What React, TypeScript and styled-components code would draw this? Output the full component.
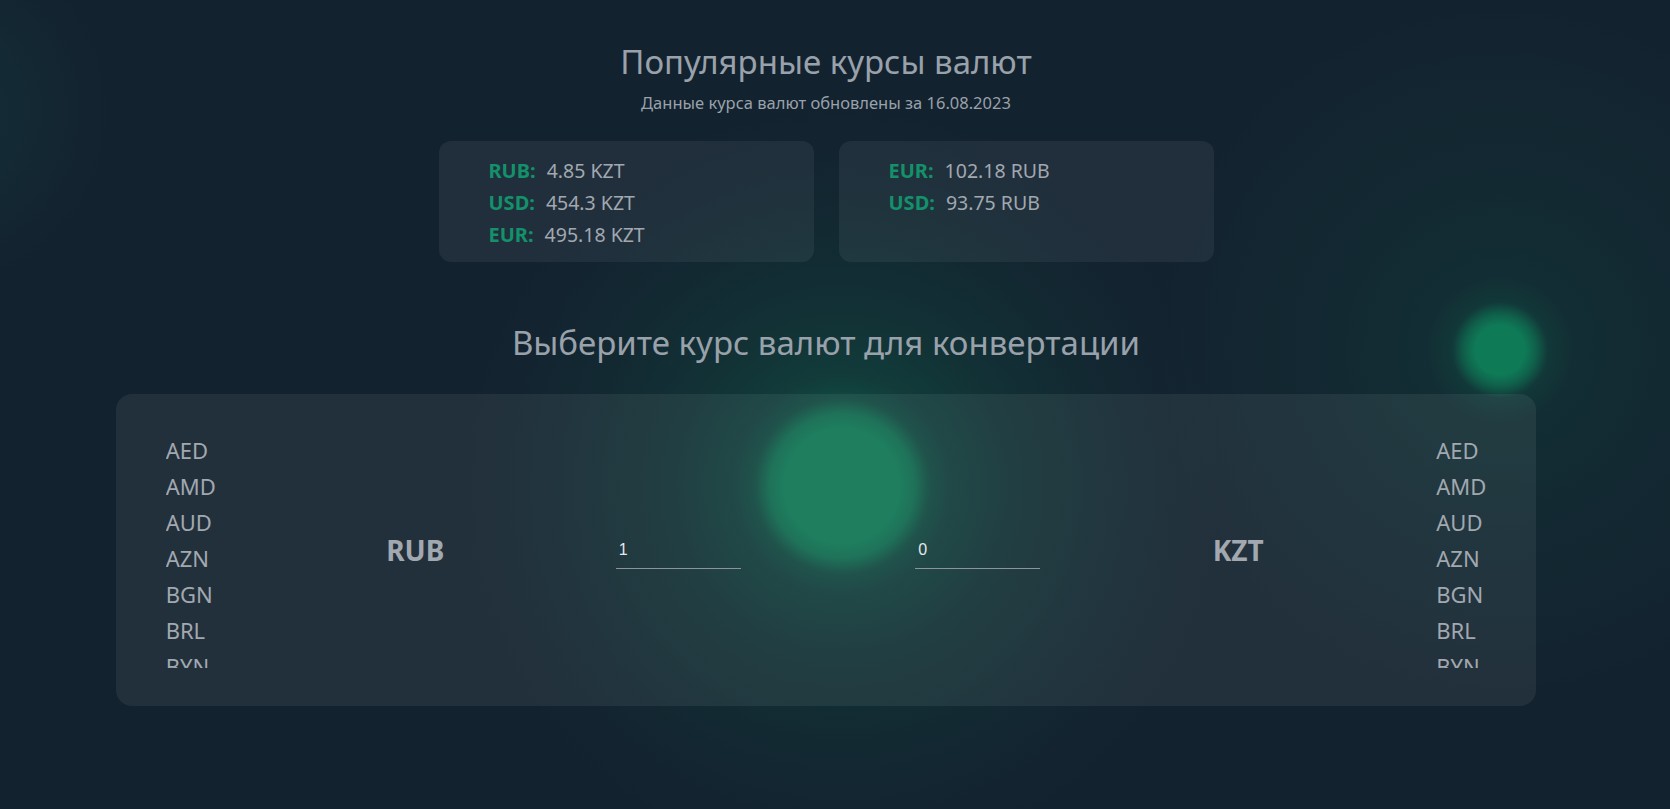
import React from "react";
import styled, { createGlobalStyle } from "styled-components";

const GlobalStyle = createGlobalStyle`
  html, body {
    margin: 0;
    padding: 0;
    min-height: 100%;
  }
  body {
    min-height: 809px;
    font-family: "Noto Sans", "Open Sans", sans-serif;
    background-color: #13222f;
    background-image:
      radial-gradient(circle at 842px 486px, #0e7553 0px, #0e7553 58px, rgba(14, 117, 83, 0.85) 72px, rgba(14, 117, 83, 0.45) 88px, rgba(14, 117, 83, 0.3) 110px, rgba(14, 117, 83, 0.19) 170px, rgba(14, 117, 83, 0.09) 250px, rgba(14, 117, 83, 0.035) 320px, rgba(14, 117, 83, 0) 380px),
      radial-gradient(circle at 1500px 350px, #0e7a56 0px, #0e7a56 25px, rgba(14, 122, 86, 0.7) 36px, rgba(14, 122, 86, 0.25) 48px, rgba(14, 122, 86, 0.13) 75px, rgba(14, 122, 86, 0.07) 180px, rgba(14, 122, 86, 0.03) 290px, rgba(14, 122, 86, 0) 345px),
      radial-gradient(circle at -70px 110px, rgba(20, 90, 80, 0.26) 0px, rgba(20, 90, 80, 0) 180px);
    background-repeat: no-repeat;
  }
`;

const Page = styled.main`
  width: calc(100% - 18px);
  min-height: 809px;
  display: flex;
  flex-direction: column;
  align-items: center;
  padding-top: 41px;
  box-sizing: border-box;
`;

const Title = styled.h1<{ $gap?: number }>`
  margin: ${(p) => p.$gap ?? 0}px 0 0;
  font-size: 33px;
  line-height: 41px;
  font-weight: 400;
  color: #99a1aa;
  text-align: center;
`;

const Subtitle = styled.p`
  margin: 10px 0 0;
  font-size: 16.5px;
  line-height: 22px;
  color: #99a1aa;
  text-align: center;
`;

const Cards = styled.section`
  margin-top: 27px;
  display: flex;
  gap: 25px;
`;

const Card = styled.div`
  width: 375px;
  box-sizing: border-box;
  padding: 14px 20px 11px 50px;
  background: rgba(255, 255, 255, 0.06);
  border-radius: 12px;
  display: flex;
  flex-direction: column;
`;

const RateRow = styled.div`
  display: flex;
  gap: 11px;
  font-size: 20px;
  line-height: 32px;
  color: #a2a8b0;
`;

const RateLabel = styled.span`
  font-weight: 700;
  color: #14906b;
`;

const RateValue = styled.span`
  font-size: 19.5px;
`;

const Panel = styled.section`
  margin-top: 31px;
  width: 86%;
  height: 312px;
  box-sizing: border-box;
  padding: 0 50px;
  background: rgba(255, 255, 255, 0.065);
  border-radius: 16px;
  display: flex;
  align-items: center;
  justify-content: space-between;
`;

const List = styled.ul`
  margin: 0;
  padding: 0;
  list-style: none;
  width: 50px;
  height: 236px;
  overflow-y: auto;
  scrollbar-width: none;
  &::-webkit-scrollbar {
    display: none;
  }
`;

const ListItem = styled.li`
  font-size: 22px;
  line-height: 36px;
  color: #a2a8b0;
  cursor: pointer;
  white-space: nowrap;
  &:hover {
    color: #14906b;
  }
`;

const Selected = styled.div`
  width: 55px;
  font-size: 28px;
  font-weight: 700;
  color: #a2a8b0;
  text-align: center;
`;

const AmountInput = styled.input`
  width: 125px;
  box-sizing: border-box;
  margin: 10px 0 0 4px;
  padding: 0 0 9px 3px;
  border: none;
  border-bottom: 1px solid #8d939a;
  background: transparent;
  color: #e6e8ea;
  font-family: "Liberation Sans", Arial, sans-serif;
  font-size: 16px;
  line-height: 18px;
  outline: none;
`;

const currencies = [
  "AED", "AMD", "AUD", "AZN", "BGN", "BRL", "BYN", "CAD", "CHF", "CNY",
  "CZK", "DKK", "EUR", "GBP", "GEL", "HKD", "HUF", "INR", "JPY", "KGS",
  "KRW", "KZT", "MDL", "NOK", "PLN", "RON", "RUB", "SEK", "SGD", "TJS",
  "TMT", "TRY", "UAH", "USD", "UZS", "ZAR",
];

const kztRates = [
  { code: "RUB", value: "4.85 KZT" },
  { code: "USD", value: "454.3 KZT" },
  { code: "EUR", value: "495.18 KZT" },
];

const rubRates = [
  { code: "EUR", value: "102.18 RUB" },
  { code: "USD", value: "93.75 RUB" },
];

export default function App() {
  return (
    <>
      <GlobalStyle />
      <Page>
        <Title>Популярные курсы валют</Title>
        <Subtitle>Данные курса валют обновлены за 16.08.2023</Subtitle>
        <Cards>
          <Card>
            {kztRates.map((r) => (
              <RateRow key={r.code}>
                <RateLabel>{r.code}:</RateLabel>
                <RateValue>{r.value}</RateValue>
              </RateRow>
            ))}
          </Card>
          <Card>
            {rubRates.map((r) => (
              <RateRow key={r.code}>
                <RateLabel>{r.code}:</RateLabel>
                <RateValue>{r.value}</RateValue>
              </RateRow>
            ))}
          </Card>
        </Cards>
        <Title $gap={60}>Выберите курс валют для конвертации</Title>
        <Panel>
          <List>
            {currencies.map((c) => (
              <ListItem key={c}>{c}</ListItem>
            ))}
          </List>
          <Selected>RUB</Selected>
          <AmountInput type="text" defaultValue="1" />
          <AmountInput type="text" defaultValue="0" />
          <Selected>KZT</Selected>
          <List>
            {currencies.map((c) => (
              <ListItem key={c}>{c}</ListItem>
            ))}
          </List>
        </Panel>
      </Page>
    </>
  );
}
